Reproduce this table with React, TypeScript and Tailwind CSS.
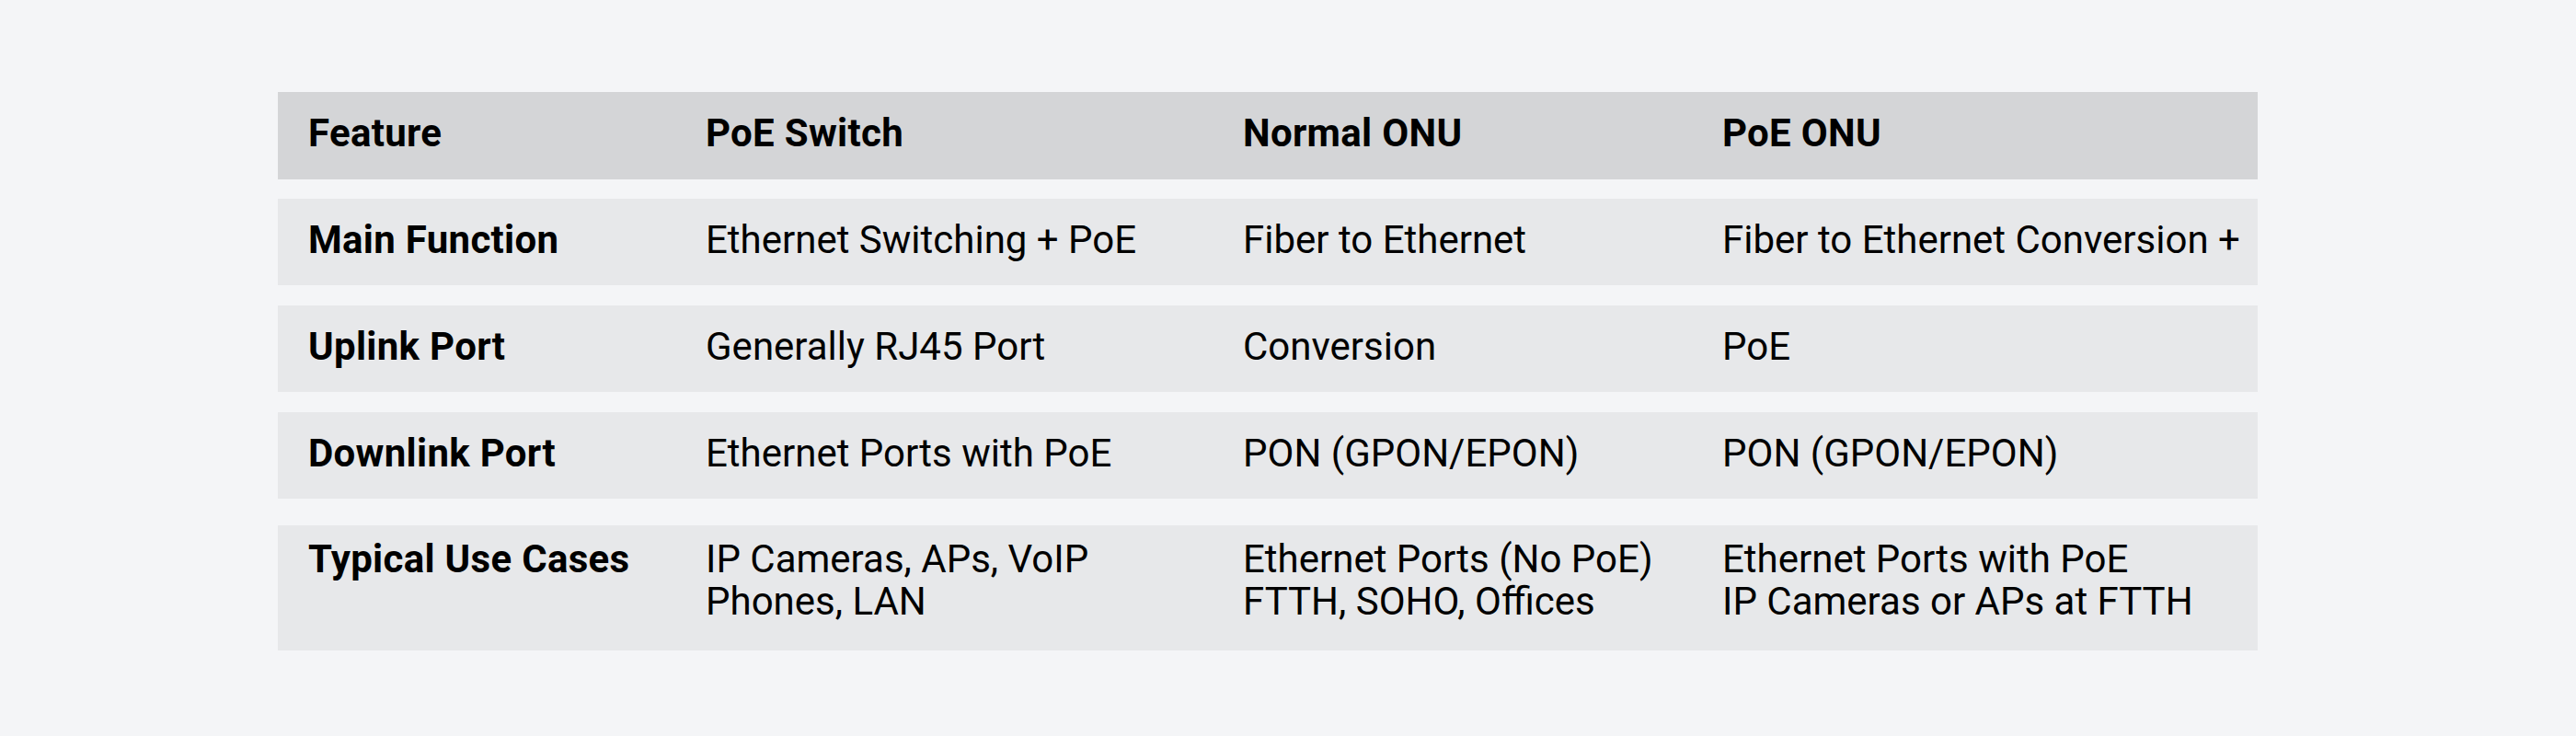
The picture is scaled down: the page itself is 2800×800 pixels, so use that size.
import React from "react";

const rows: { cells: string[][]; h: string; pt: string; mt: string }[] = [
  {
    cells: [["Main Function"], ["Ethernet Switching + PoE"], ["Fiber to Ethernet"], ["Fiber to Ethernet Conversion +"]],
    h: "h-[94px]",
    pt: "pt-[22px]",
    mt: "mt-[21px]",
  },
  {
    cells: [["Uplink Port"], ["Generally RJ45 Port"], ["Conversion"], ["PoE"]],
    h: "h-[94px]",
    pt: "pt-[22px]",
    mt: "mt-[22px]",
  },
  {
    cells: [["Downlink Port"], ["Ethernet Ports with PoE"], ["PON (GPON/EPON)"], ["PON (GPON/EPON)"]],
    h: "h-[94px]",
    pt: "pt-[22px]",
    mt: "mt-[22px]",
  },
  {
    cells: [
      ["Typical Use Cases"],
      ["IP Cameras, APs, VoIP", "Phones, LAN"],
      ["Ethernet Ports (No PoE)", "FTTH, SOHO, Offices"],
      ["Ethernet Ports with PoE", "IP Cameras or APs at FTTH"],
    ],
    h: "h-[136px]",
    pt: "pt-[14px]",
    mt: "mt-[29px]",
  },
];

const colW = ["w-[432px]", "w-[584px]", "w-[521px]", "w-[615px]"];

export default function App() {
  return (
    <div
      className="h-[800px] w-full bg-[#f4f5f7] pl-[302px] pt-[100px] text-black"
      style={{ fontFamily: "Roboto, 'Liberation Sans', sans-serif" }}
    >
      <div className="w-[2152px]">
        <div className="flex h-[95px] bg-[#d4d5d7] pt-[22px] text-[42px] font-bold leading-[46px] tracking-[0.3px]">
          <div className={`${colW[0]} pl-[33px]`}>Feature</div>
          <div className={`${colW[1]} pl-[33px]`}>PoE Switch</div>
          <div className={`${colW[2]} pl-[33px]`}>Normal ONU</div>
          <div className={`${colW[3]} pl-[33px]`}>PoE ONU</div>
        </div>
        {rows.map((r, i) => (
          <div key={i} className={`flex ${r.h} ${r.pt} ${r.mt} bg-[#e7e8ea] text-[42px] leading-[46px]`}>
            {r.cells.map((c, j) => (
              <div
                key={j}
                className={`${colW[j]} pl-[33px] ${j === 0 ? "font-bold tracking-[0.3px]" : "font-normal"}`}
              >
                {c.map((line, k) => (
                  <div key={k} className="whitespace-nowrap">
                    {line}
                  </div>
                ))}
              </div>
            ))}
          </div>
        ))}
      </div>
    </div>
  );
}
